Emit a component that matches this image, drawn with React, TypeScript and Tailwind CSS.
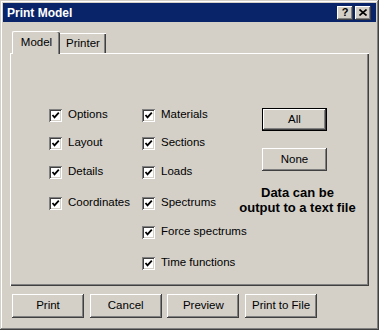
import React from "react";

const face = "bg-[#d4d0c8]";
const raised =
  "shadow-[inset_-1px_-1px_#404040,inset_1px_1px_#ffffff,inset_-2px_-2px_#808080,inset_2px_2px_#d4d0c8]";

const rowGaps = ["", "mt-[12px]", "mt-[13px]", "mt-[15px]", "mt-[13px]", "mt-[15px]"];

function CheckBox() {
  return (
    <span className="w-[13px] h-[13px] shrink-0 bg-white shadow-[inset_1px_1px_#808080,inset_-1px_-1px_#ffffff,inset_2px_2px_#404040,inset_-2px_-2px_#d4d0c8] flex items-center justify-center">
      <svg width="9" height="9" viewBox="0 0 9 9">
        <path d="M1.5 4 L3.5 6.3 L7.8 1.6" fill="none" stroke="#000" strokeWidth="1.8" />
      </svg>
    </span>
  );
}

function Option({ label, gap }: { label: string; gap: string }) {
  return (
    <div className={`flex items-center h-[16px] gap-[6px] ${gap}`}>
      <CheckBox />
      <span className="whitespace-nowrap">{label}</span>
    </div>
  );
}

function Btn({ label, className = "" }: { label: string; className?: string }) {
  return (
    <div className={`${face} ${raised} flex items-center justify-center ${className}`}>
      {label}
    </div>
  );
}

export default function App() {
  const left = ["Options", "Layout", "Details", "Coordinates"];
  const right = ["Materials", "Sections", "Loads", "Spectrums", "Force spectrums", "Time functions"];

  return (
    <div
      className={`w-[379px] h-[330px] ${face} p-[3px] flex flex-col text-[11.5px] text-black shadow-[inset_-1px_-1px_#404040,inset_1px_1px_#d4d0c8,inset_-2px_-2px_#808080,inset_2px_2px_#ffffff]`}
      style={{ fontFamily: '"Liberation Sans", Arial, sans-serif' }}
    >
      {/* title bar */}
      <div className="h-[19px] bg-[#0a246a] flex items-center pl-[4px] pr-[5px]">
        <span className="text-white font-bold text-[12px] leading-none">Print Model</span>
        <div className="flex-1" />
        <div className="flex gap-[2px]">
          <div className={`w-[16px] h-[14px] ${face} ${raised} flex items-center justify-center font-bold text-[11px] leading-none`}>
            ?
          </div>
          <div className={`w-[16px] h-[14px] ${face} ${raised} flex items-center justify-center`}>
            <svg width="8" height="7" viewBox="0 0 8 7">
              <path d="M0.5 0.5 L7.5 6.5 M7.5 0.5 L0.5 6.5" stroke="#000" strokeWidth="1.6" />
            </svg>
          </div>
        </div>
      </div>

      <div className="px-[7px] flex flex-col">
        {/* tabs */}
        <div className="mt-[9px] h-[22px] flex items-end pl-[2px]">
          <div className={`relative z-10 w-[48px] h-[23px] -mb-[1px] ${face} border-l border-t border-white rounded-t-[2px] shadow-[inset_-1px_0_#404040,inset_-2px_0_#808080] flex items-center justify-center pb-[1px]`}>
            Model
          </div>
          <div className={`w-[46px] h-[20px] ${face} border-t border-white shadow-[inset_-1px_0_#404040,inset_-2px_0_#808080] flex items-center justify-center`}>
            Printer
          </div>
        </div>

        {/* panel */}
        <div className="h-[233px] border-l border-t border-white shadow-[inset_-1px_-1px_#404040,inset_-2px_-2px_#808080] flex items-start pl-[38px]">
          <div className="w-[93px] pt-[53px] flex flex-col">
            {left.map((l, i) => (
              <Option key={l} label={l} gap={rowGaps[i]} />
            ))}
          </div>
          <div className="w-[120px] pt-[53px] flex flex-col">
            {right.map((l, i) => (
              <Option key={l} label={l} gap={rowGaps[i]} />
            ))}
          </div>
          <div className="w-[65px] pt-[54px] flex flex-col items-center">
            <div className="w-[65px] h-[23px] border border-black">
              <Btn label="All" className="w-full h-full" />
            </div>
            <Btn label="None" className="w-[65px] h-[23px] mt-[17px]" />
            <div className="mt-[14px] ml-[6px] flex flex-col items-center font-bold text-[13px] leading-[15px] whitespace-nowrap">
              <span>Data can be</span>
              <span>output to a text file</span>
            </div>
          </div>
        </div>

        {/* buttons */}
        <div className="mt-[8px] pl-[2px] flex gap-[5.7px]">
          <Btn label="Print" className="w-[72px] h-[24px]" />
          <Btn label="Cancel" className="w-[72px] h-[24px]" />
          <Btn label="Preview" className="w-[72px] h-[24px]" />
          <Btn label="Print to File" className="w-[72px] h-[24px]" />
        </div>
      </div>
    </div>
  );
}
